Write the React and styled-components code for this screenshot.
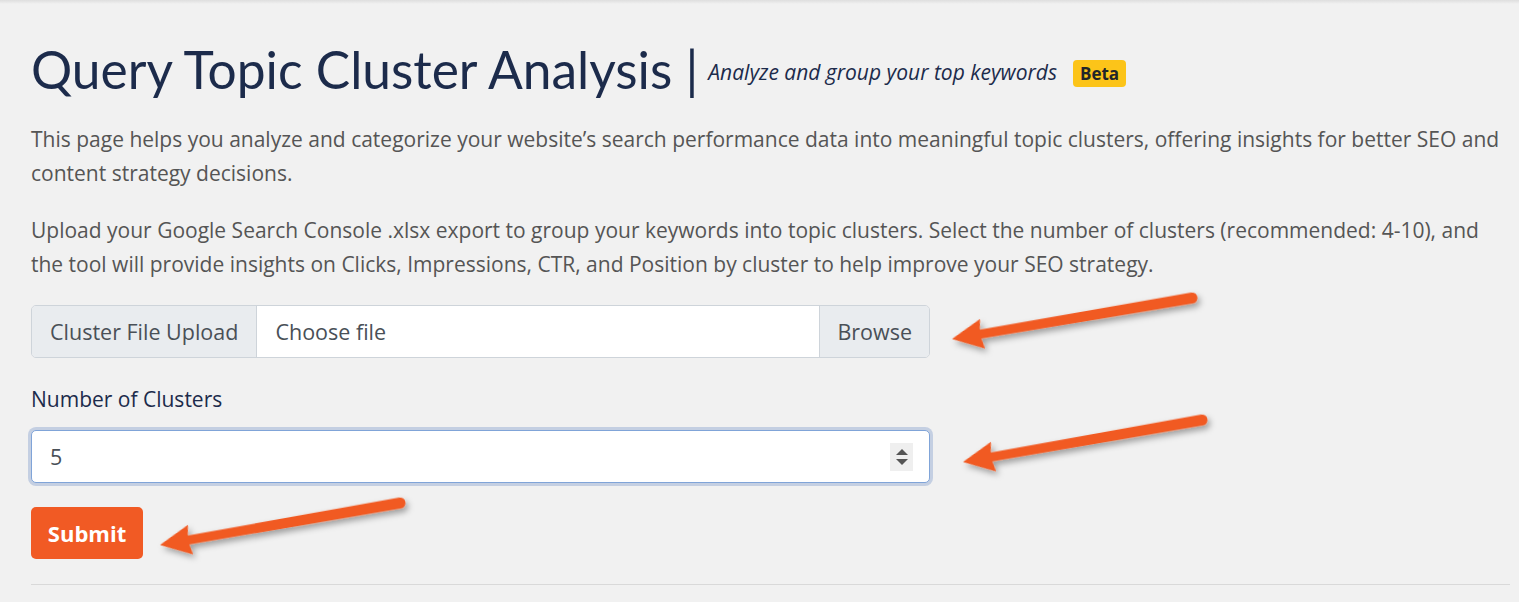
import React from "react";
import styled, { createGlobalStyle } from "styled-components";

const Global = createGlobalStyle`
  html, body { margin: 0; padding: 0; background: #f1f1f1; }
  body { font-family: "Open Sans", "Liberation Sans", sans-serif; }
  * { box-sizing: border-box; }
`;

const navy = "#1c2b4b";
const orange = "#f15a24";

const Page = styled.div`
  position: relative;
  min-height: 602px;
  background: #f1f1f1;
`;

const TopShade = styled.div`
  height: 4px;
  background: linear-gradient(#dedede, #f1f1f1);
`;

const Container = styled.main`
  padding: 34px 9px 0 31px;
`;

const TitleRow = styled.div`
  display: flex;
  align-items: center;
  gap: 10px;
  margin-bottom: 22px;
`;

const Title = styled.h1`
  margin: 0;
  font-family: Lato, "Liberation Sans", sans-serif;
  font-weight: 400;
  font-size: 51.5px;
  line-height: 62px;
  color: ${navy};
  white-space: nowrap;
`;

const Subtitle = styled.em`
  font-size: 21px;
  color: ${navy};
  margin-top: 6px;
  margin-right: 6px;
`;

const Badge = styled.span`
  display: inline-flex;
  align-items: center;
  justify-content: center;
  margin-top: 9px;
  height: 27px;
  padding: 0 7px;
  background: #fcc419;
  border-radius: 4px;
  font-size: 17px;
  font-weight: 700;
  color: #212529;
`;

const Para = styled.p`
  margin: 0 0 23px;
  font-size: 21px;
  line-height: 34px;
  color: #555;
`;

const InputGroup = styled.div`
  display: flex;
  width: 899px;
  height: 53px;
  margin-top: 24px;
  border: 1px solid #ced4da;
  border-radius: 5px;
  overflow: hidden;
  font-size: 21.5px;
`;

const Addon = styled.div`
  display: flex;
  align-items: center;
  padding: 0 ${(p) => (p.$left ? 18 : 17)}px;
  background: #e9ecef;
  color: #495057;
  ${(p) => (p.$left ? "border-right: 1px solid #ced4da;" : "border-left: 1px solid #ced4da;")}
`;

const FileField = styled.div`
  flex: 1;
  display: flex;
  align-items: center;
  padding: 0 18px;
  background: #fff;
  color: #495057;
`;

const Label = styled.label`
  display: block;
  margin-top: 27px;
  font-size: 21px;
  line-height: 28px;
  color: ${navy};
`;

const NumberField = styled.div`
  display: flex;
  align-items: center;
  width: 899px;
  height: 53px;
  margin-top: 17px;
  padding: 0 16px 0 18px;
  background: #fff;
  border: 1px solid #80a4d8;
  border-radius: 5px;
  box-shadow: 0 0 0 3px #c4cfe2;
`;

const NumberInput = styled.input`
  flex: 1;
  border: 0;
  outline: none;
  background: transparent;
  font-family: inherit;
  font-size: 21.5px;
  color: #495057;
  padding: 0;
`;

const Spinner = styled.div`
  display: flex;
  flex-direction: column;
  align-items: center;
  justify-content: center;
  gap: 4px;
  width: 23px;
  height: 28px;
  background: #efefef;
`;

const Tri = styled.span`
  width: 0;
  height: 0;
  border-left: 6px solid transparent;
  border-right: 6px solid transparent;
  ${(p) => (p.$up ? "border-bottom: 6px solid #555;" : "border-top: 6px solid #555;")}
`;

const SubmitButton = styled.button`
  display: block;
  margin-top: 24px;
  width: 112px;
  height: 52px;
  border: 0;
  border-radius: 5px;
  background: ${orange};
  color: #fff;
  font-family: inherit;
  font-weight: 700;
  font-size: 22px;
`;

const Rule = styled.hr`
  margin: 25px 0 0;
  border: 0;
  border-top: 1px solid #d9d9d9;
`;

const Overlay = styled.svg`
  position: absolute;
  left: 0;
  top: 0;
  pointer-events: none;
`;

const arrows = [
  { tip: [952, 339], tail: [1192, 298] },
  { tip: [963, 462], tail: [1202, 420] },
  { tip: [160, 545], tail: [400, 503] },
];

function Arrow({ tip, tail }) {
  const dx = tail[0] - tip[0];
  const dy = tail[1] - tip[1];
  const L = Math.hypot(dx, dy);
  const ang = (Math.atan2(dy, dx) * 180) / Math.PI;
  const d = `M0,0 L31,-15 L29,-4.5 L${L},-5.5 A5.5,5.5 0 0 1 ${L},5.5 L29,4.5 L31,15 Z`;
  return (
    <g transform={`translate(${tip[0]},${tip[1]}) rotate(${ang})`}>
      <path d={d} fill={orange} filter="url(#shadow)" />
    </g>
  );
}

export default function App() {
  return (
    <Page>
      <Global />
      <TopShade />
      <Container>
        <TitleRow>
          <Title>Query Topic Cluster Analysis |</Title>
          <Subtitle>Analyze and group your top keywords</Subtitle>
          <Badge>Beta</Badge>
        </TitleRow>
        <Para>
          This page helps you analyze and categorize your website’s search performance data into meaningful topic
          clusters, offering insights for better SEO and content strategy decisions.
        </Para>
        <Para>
          Upload your Google Search Console .xlsx export to group your keywords into topic clusters. Select the number
          of clusters (recommended: 4-10), and the tool will provide insights on Clicks, Impressions, CTR, and Position
          by cluster to help improve your SEO strategy.
        </Para>
        <InputGroup>
          <Addon $left>Cluster File Upload</Addon>
          <FileField>Choose file</FileField>
          <Addon>Browse</Addon>
        </InputGroup>
        <Label>Number of Clusters</Label>
        <NumberField>
          <NumberInput type="text" defaultValue="5" />
          <Spinner>
            <Tri $up />
            <Tri />
          </Spinner>
        </NumberField>
        <SubmitButton>Submit</SubmitButton>
        <Rule />
      </Container>
      <Overlay width="1519" height="602" viewBox="0 0 1519 602">
        <defs>
          <filter id="shadow" x="-20%" y="-50%" width="140%" height="200%">
            <feDropShadow dx="2" dy="4" stdDeviation="3" floodColor="#000" floodOpacity="0.35" />
          </filter>
        </defs>
        {arrows.map((a, i) => (
          <Arrow key={i} {...a} />
        ))}
      </Overlay>
    </Page>
  );
}
